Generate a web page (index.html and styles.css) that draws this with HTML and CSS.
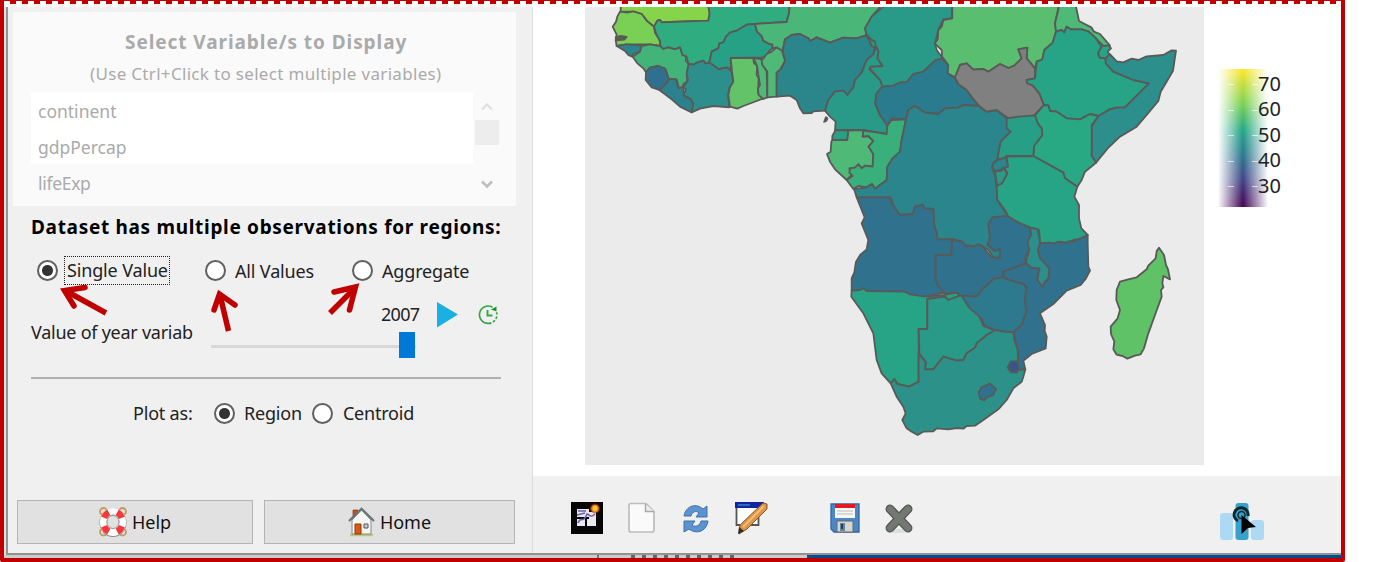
FILE: index.html
```
<!DOCTYPE html>
<html lang="en">
<head>
<meta charset="utf-8">
<title>Map variables</title>
<link rel="stylesheet" href="styles.css">
</head>
<body>
<div class="frame">
  <div class="dashes"></div>
  <main class="window">
    <aside class="side">
      <section class="variables">
        <h2 class="vtitle"><span class="t-title">Select Variable/s to Display</span></h2>
        <p class="hint"><span class="t-hint">(Use Ctrl+Click to select multiple variables)</span></p>
        <div class="listbox">
          <ul class="list"><li>continent</li><li>gdpPercap</li><li class="shade">lifeExp</li></ul>
          <div class="scroll">
            <svg class="chev" width="14" height="12" viewBox="0 0 14 12"><path d="M2 8.500L7 3.500l5 5" fill="none" stroke="#dedede" stroke-width="2"/></svg>
            <div class="thumb"></div>
            <svg class="chev down" width="14" height="12" viewBox="0 0 14 12"><path d="M2 3.500l5 5 5-5" fill="none" stroke="#bebebe" stroke-width="2.600"/></svg>
          </div>
        </div>
      </section>
      <h3 class="dataset"><span class="t-data">Dataset has multiple observations for regions:</span></h3>
      <div class="choices">
        <div class="choice c1"><i class="radio on"></i><span class="focus">Single Value</span></div>
        <div class="choice c2"><i class="radio"></i><span>All Values</span></div>
        <div class="choice c3"><i class="radio"></i><span>Aggregate</span></div>
      </div>
      <div class="year">
        <span class="ylabel">Value of year variab</span>
        <div class="slider">
          <span class="yval">2007</span>
          <div class="track"><div class="handle"></div></div>
        </div>
        <svg class="play" width="21" height="26" viewBox="0 0 21 26"><path d="M0 0L21 12.500 0 25.500z" fill="#1bb0e4"/></svg>
        <svg class="clock" width="22" height="22" viewBox="0 0 22 22" fill="none" stroke="#35a846" stroke-width="1.700"><path d="M15.500 3.200A8.700 8.700 0 1 0 12 19.400"/><path d="M12 19.400A8.700 8.700 0 0 0 19.500 8" stroke-dasharray="2.500 1.800"/><path d="M10.500 6v5.500h5" stroke-width="2"/><path d="M14 5.500l5.500-3v5z" fill="#149c25" stroke="none"/></svg>
      </div>
      <div class="rule"></div>
      <div class="plot"><span class="plabel">Plot as:</span><i class="radio on"></i><span class="region">Region</span><i class="radio"></i><span>Centroid</span></div>
      <div class="buttons">
        <div class="btn help">
          <svg width="28" height="30" viewBox="0 0 28 30"><g fill="none" stroke="#c49b59" stroke-width="1.800"><circle cx="4.500" cy="4.500" r="3.500"/><circle cx="23.500" cy="4.500" r="3.500"/><circle cx="4.500" cy="25" r="3.500"/><circle cx="23.500" cy="25" r="3.500"/></g><ellipse cx="14" cy="15.500" rx="10" ry="11" fill="none" stroke="#8c8c8c" stroke-width="7"/><ellipse cx="14" cy="15" rx="9.800" ry="10.700" fill="none" stroke="#fff" stroke-width="6.500"/><ellipse cx="14" cy="15" rx="9.800" ry="10.700" fill="none" stroke="#f9363a" stroke-width="6.500" pathLength="80" stroke-dasharray="9 11" stroke-dashoffset="-5.500"/><ellipse cx="14" cy="15" rx="6" ry="6.500" fill="#e1e1e1" stroke="#999"/></svg>
          <span>Help</span>
        </div>
        <div class="btn home">
          <svg width="27" height="30" viewBox="0 0 27 30"><path d="M2 28h23" stroke="#bac878" stroke-width="2.500"/><path d="M5 3h5v9H5z" fill="#c64c15" stroke="#873d21" stroke-width=".7"/><path d="M4 13L13.500 3 23 13v14H4z" fill="#f5f5f2" stroke="#888"/><path d="M1 14L13.500 1.800 26 14" fill="none" stroke="#69737a" stroke-width="2.200"/><path d="M7 17h6v10H7z" fill="#d65a13" stroke="#91380e"/><path d="M16 17h4v4h-4z" fill="#ccd" stroke="#555"/></svg>
          <span>Home</span>
        </div>
      </div>
    </aside>
    <section class="main">
      <div class="canvas">
        <svg class="map" width="619" height="458" viewBox="-45 21 1857 1374">
          <g stroke="#595a58" stroke-width="5.500" stroke-linejoin="round">
            <g>
              <path fill="#85d44a" d="M62 0L62 35 100 35 125 42 140 62 162 80 172 62 180 60 185 67 210 66 325 62 329 40 322 0z"/>
              <path fill="#7ad055" d="M60 35L82 38 100 34 125 42 140 62 162 80 165 98 178 118 182 138 150 133 80 133 50 138 47 120 50 104 38 80 48 65 52 50z"/>
              <path fill="#595f4e" d="M47 112L62 108 80 111 73 119 50 121z"/>
              <path fill="#2fad80" d="M322 0L329 40 325 62 210 66 185 67 180 60 172 62 162 80 170 105 180 122 182 143 190 147 205 142 225 148 240 142 247 165 259 170 266 192 280 194 290 188 310 182 316 190 328 188 335 155 355 145 358 130 370 127 378 110 390 98 410 92 440 74 465 72 490 70 560 66 567 40 570 0z"/>
              <path fill="#2a858d" d="M50 138L80 133 125 137 120 155 100 162 96 170 85 165 75 153z"/>
              <path fill="#42b479" d="M125 138L150 133 180 138 190 147 205 142 225 148 240 142 247 165 259 170 257 182 266 192 260 222 262 245 250 252 248 264 236 262 230 238 205 236 198 210 175 198 150 203 138 217 130 205 112 190 98 170 120 155z"/>
              <path fill="#30708e" d="M138 217L150 203 175 198 195 205 206 236 200 250 178 270 155 262 137 240z"/>
              <path fill="#2b818e" d="M178 270L200 250 208 236 228 238 232 255 236 265 250 260 252 288 272 297 280 310 275 337 240 320 215 298z"/>
              <path fill="#2c8f8c" d="M266 192L280 194 290 188 310 182 316 190 328 188 340 195 355 207 380 202 395 214 400 245 388 265 384 285 388 322 340 318 300 326 275 337 280 310 272 297 250 284 258 268 250 262 264 240 260 220z"/>
              <path fill="#27a186" d="M328 188L335 155 355 145 358 130 370 127 378 110 390 98 410 92 440 74 465 72 471 95 485 108 490 122 508 132 517 133 518 145 507 154 502 163 490 172 392 174 393 208 380 202 355 207 340 195z"/>
              <path fill="#62c368" d="M392 174L460 174 462 190 472 197 470 225 476 235 474 280 490 295 470 303 430 318 412 326 390 320 385 285 390 262 400 245 396 214z"/>
              <path fill="#4fb978" d="M460 174L484 177 487 190 500 215 502 292 490 297 476 285 474 265 480 255 475 225 471 197z"/>
              <path fill="#4fb978" d="M485 182L500 162 515 155 530 142 545 150 555 182 540 210 530 218 530 290 502 292 502 215 487 195z"/>
              <path fill="#4ab678" d="M570 0L567 40 560 66 490 70 465 72 471 95 485 108 490 122 508 132 517 133 518 145 530 142 548 153 555 118 575 105 600 102 625 115 631 123 650 112 690 128 730 113 770 115 800 105 795 85 815 50 850 10 850 0z"/>
              <path fill="#2b868c" d="M555 118L575 105 600 102 625 115 631 123 650 112 690 128 730 113 770 115 800 105 810 122 826 140 820 163 800 180 785 218 765 240 760 262 742 285 730 272 705 275 685 300 675 332 640 334 635 339 610 340 600 325 590 300 570 287 530 290 530 218 545 205 556 182 548 153z"/>
              <path fill="#2a9a88" d="M850 0L850 20 815 50 795 85 800 105 820 125 835 155 832 175 847 198 810 200 812 208 840 240 847 260 880 257 920 247 940 225 970 216 1005 182 1028 175 1010 150 1005 130 1015 90 1030 58 1055 55 1057 0z"/>
              <path fill="#2a9a88" d="M829 140L820 163 800 180 785 218 765 240 760 262 742 285 730 272 705 275 685 300 675 332 690 350 707 365 705 390 790 390 860 402 864 375 840 345 825 310 830 280 847 260 840 240 808 207 812 200 847 198 832 175 835 155z"/>
              <path fill="#2a9a88" d="M800 105L812 118 825 125 828 145 815 138z"/>
              <path fill="#27a186" d="M707 390L745 392 742 420 697 420 697 408z"/>
              <path fill="#4fb978" d="M745 392L790 390 788 410 805 408 820 423 806 440 820 462 818 500 795 497 785 505 775 493 765 503 748 505 755 525 740 540 705 508 690 485 681 462 692 455 694 425 697 420 742 420z"/>
              <path fill="#39b07c" d="M790 392L828 397 860 402 862 375 875 360 918 358 905 420 900 455 878 475 862 500 860 540 825 566 816 552 800 562 775 558 760 567 740 540 758 528 748 518 750 505 765 503 775 493 785 505 795 497 818 500 820 462 806 440 820 423 805 408 788 410z"/>
              <path fill="#515755" stroke-width="3" d="M677 350l7 4-4 10-9 3z"/>
            </g>
            <g transform="translate(840 0)">
              <path fill="#2a7b8e" d="M7 260L40 257 60 247 80 246 100 222 130 215 165 182 185 176 205 195 207 222 225 235 235 252 260 270 278 295 298 318 250 315 235 323 195 325 175 342 135 338 105 318 85 330 78 358 35 355 22 378 0 345 -15 310 -10 280z"/>
              <path fill="#2b858d" d="M78 358L85 330 105 318 135 338 175 342 195 325 235 323 250 315 298 318 320 335 350 330 380 355 383 380 392 395 362 425 355 475 340 490 337 505 345 525 350 560 352 600 375 635 385 650 338 652 325 672 330 710 323 735 345 753 360 747 360 774 340 772 325 750 310 740 295 732 290 740 255 735 245 725 220 718 172 718 170 697 163 680 160 627 133 625 128 614 106 620 98 642 60 645 40 617 32 592 -70 592 -78 567 -40 562 -24 552 -15 566 20 540 22 500 38 475 60 455 65 420z"/>
              <path fill="#59be70" d="M217 0L217 55 190 60 185 80 175 90 173 118 164 130 185 150 186 170 205 195 203 220 225 232 240 195 260 190 280 209 310 207 325 215 360 192 385 204 403 197 425 175 415 148 442 143 440 175 465 205 470 185 487 178 493 150 518 128 528 95 525 70 536 20 536 0z"/>
              <path fill="#4fb978" d="M536 0L536 25 525 70 528 95 545 90 553 97 560 80 572 88 605 88 625 94 645 112 672 140 690 137 660 102 642 95 635 83 597 63 588 20 588 0z"/>
              <path fill="#808080" d="M225 232L240 195 260 190 280 209 310 207 325 215 360 192 385 204 403 197 425 175 415 148 442 143 440 175 465 205 465 235 440 240 441 249 459 257 478 280 492 315 462 346 450 352 385 355 350 330 320 335 298 318 278 295 260 270 235 252z"/>
              <path fill="#26a485" d="M528 95L545 90 553 97 560 80 572 88 605 88 625 94 645 112 664 140 655 165 660 173 677 175 677 186 700 215 760 240 807 250 735 322 710 323 690 328 655 348 630 342 600 358 560 355 530 335 510 333 505 316 492 315 478 280 459 257 441 249 440 240 465 235 470 185 487 178 493 150 518 128z"/>
              <path fill="#26a485" d="M666 138L686 136 693 145 683 155 689 164 677 175 660 173 654 158z"/>
              <path fill="#2c8f8c" d="M677 175L689 162 710 184 730 187 755 176 775 180 800 169 850 165 875 151 888 152 879 212 858 248 842 275 835 303 800 345 770 380 720 410 683 445 648 488 635 468 635 380 655 348 690 328 710 323 735 322 807 250 760 240 700 215 677 190z"/>
              <path fill="#28a984" d="M465 346L492 315 505 316 510 333 530 335 560 355 600 358 630 342 655 348 635 375 635 468 648 488 615 515 605 540 592 560 555 535 550 518 460 468 462 438 487 405 485 385 473 370z"/>
              <path fill="#279f87" d="M380 355L415 350 465 346 473 370 485 385 487 405 462 438 460 468 380 468 370 478 352 477 362 425 392 395 380 385z"/>
              <path fill="#26a485" d="M380 470L460 468 550 518 555 535 592 560 583 590 597 615 597 655 604 685 623 705 600 717 580 720 570 730 540 725 530 732 508 728 480 730 477 690 450 683 420 670 385 650 375 630 352 600 350 555 365 550 382 520 373 505 383 498z"/>
              <path fill="#2b858d" d="M352 480L378 472 384 500 366 507 345 514 336 502 340 490z"/>
              <path fill="#2a9a88" d="M345 515L365 512 369 503 382 520 366 550 352 557 348 535z"/>
            </g>
            <g transform="translate(720 600)">
              <path fill="#30718d" d="M50 -8L150 -8 158 15 180 45 218 42 225 20 248 14 253 25 280 27 283 80 290 97 292 118 338 118 333 165 287 165 287 240 295 258 315 278 255 290 210 283 195 275 80 273 70 265 60 270 35 272 35 235 43 217 48 185 62 163 80 148 85 120 65 70 74 52 60 17z"/>
              <path fill="#26a485" d="M35 272L60 270 70 265 80 273 195 275 210 283 255 290 310 285 350 278 362 285 325 300 315 290 262 297 262 387 236 387 236 545 208 560 172 552 163 537 152 550 125 520 110 480 100 400 70 340 34 290z"/>
              <path fill="#2a9a88" d="M262 297L315 290 325 300 365 285 385 320 415 343 430 378 465 392 440 405 410 430 405 443 380 460 370 480 350 482 310 470 280 508 255 508 257 487 238 460 236 387 262 387z"/>
              <path fill="#30728e" d="M338 118L365 125 376 137 400 140 415 133 430 142 455 172 480 174 480 147 464 153 443 135 450 110 445 72 458 52 500 47 535 68 570 83 573 105 567 125 567 150 555 175 557 190 490 215 492 232 462 236 425 270 410 290 362 287 350 278 315 280 295 258 287 240 287 165 333 165z"/>
              <path fill="#2d798e" d="M365 287L410 290 425 270 462 236 492 232 515 242 550 252 560 262 555 300 560 335 545 375 520 397 490 395 465 390 432 375 425 355 390 325z"/>
              <path fill="#30718d" d="M600 130L630 128 640 132 655 125 670 130 690 123 700 125 743 105 743 130 745 200 750 212 738 235 722 255 680 272 640 312 600 340 615 375 614 393 620 410 617 445 575 462 550 482 556 508 535 510 533 450 520 397 545 375 560 335 555 300 560 262 550 252 515 242 492 232 490 215 557 190 575 203 597 205 592 240 608 260 625 235 628 205 600 175 593 150z"/>
              <path fill="#2c8f8c" d="M570 83L592 87 598 110 600 130 593 150 600 175 628 205 625 235 615 245 608 260 592 240 598 205 575 203 557 188 568 150 563 125 574 105z"/>
              <path fill="#2c9289" d="M152 550L163 537 172 552 208 560 236 545 236 460 257 487 255 508 280 508 310 470 350 482 370 480 380 460 405 443 410 430 440 405 465 390 490 395 520 397 523 420 533 450 535 510 556 508 550 530 545 545 520 565 500 600 475 628 430 660 405 677 380 678 370 686 350 684 325 688 290 685 280 694 250 695 233 705 215 695 200 685 187 660 197 640 190 620 170 590z"/>
              <path fill="#30718d" d="M416 577L424 562 450 551 468 567 460 585 440 592 432 601 420 595z"/>
              <path fill="#39568c" d="M512 484L532 484 537 508 530 518 512 516 503 502z"/>
              <path fill="#5fc267" d="M957 143L972 165 978 195 984 208 990 238 970 228 967 250 970 262 963 270 965 290 945 345 925 400 912 445 902 463 885 467 862 476 848 468 830 464 820 448 823 425 813 402 812 380 833 355 840 330 829 300 830 270 840 245 865 238 890 232 920 208 925 197 947 175 950 153z"/>
            </g>
          </g>
        </svg>
        <div class="legend">
          <div class="ramp"><div class="ticks"><i></i><i></i><i></i><i></i><i></i></div></div>
          <div class="nums"><span>70</span><span>60</span><span>50</span><span>40</span><span>30</span></div>
        </div>
      </div>
      <div class="toolbar">
        <svg width="32" height="32" viewBox="0 0 32 32"><path fill="#050505" d="M0 0h32v32H0z"/><path d="M6 7h12v8H6zM18 10h7v8h-7zM6 17h8v7H6zM16 17h9v7h-9z" fill="#e9e7ef"/><path d="M7 9h8M7 21c3-8 5 2 9-9 2 0 3 5 8 0M6 13l8-2" stroke="#6c62a8" stroke-width="1.600" fill="none"/><circle cx="24" cy="6.500" r="5" fill="#c42c0b" opacity=".6"/><circle cx="24" cy="6.500" r="3" fill="#f6d342" stroke="#ee891b" stroke-width="1.500"/></svg>
        <svg class="t2" width="30" height="32" viewBox="0 0 30 32"><path d="M4 1.500h15l8 8V28q0 2-2 2H4q-2 0-2-2V3.500q0-2 2-2z" fill="#fafafa" stroke="#bdbdbd" stroke-width="1.700"/><path d="M18.500 2v7.500H27" fill="#eee" stroke="#aaa" stroke-width="1.500"/></svg>
        <svg class="t3" width="28" height="30" viewBox="0 0 28 30"><g fill="#5b94cf" stroke="#3d71aa" stroke-width="1" stroke-linejoin="round"><path d="M2 12C4 1 15-1 21 5l4-3v11H14l3-4c-3-3-7-1-8 3z"/><path d="M26 17C24 29 13 30 7 25l-5 3V17h11l-3 4c4 3 8 0 9-4z"/></g></svg>
        <svg class="t4" width="33" height="33" viewBox="0 0 33 33"><path d="M1.500 1h22v22h-22z" fill="#fff" stroke="#555" stroke-width="1.800"/><path d="M0 0h29v6H0z" fill="#1026a0"/><path d="M3 3h12" stroke="#3384c7" stroke-width="1.500"/><path d="M28 1l4 1v5L12 27l-8 5 1-9z" fill="#dc9448" stroke="#8a5529"/><path d="M29 4L8 25" stroke="#f5bd78" stroke-width="2"/><path d="M3 32l1-7 5 4z" fill="#332b2a"/></svg>
        <svg class="t5" width="30" height="30" viewBox="0 0 30 30"><path d="M1 1h28v28H4l-3-3z" fill="#4b86c7" stroke="#3166a2" stroke-width="1.300"/><path d="M5 1h20v14H5z" fill="#f6f6f5"/><path d="M5 1h20v4H5z" fill="#e71920"/><path d="M7 8h16M7 11h16" stroke="#bbb"/><path d="M7 18h16v11H7z" fill="#d6d6d3" stroke="#666"/><path d="M10 20h5v8h-5z" fill="#6485a3"/><path d="M12 21v5" stroke="#233e57" stroke-width="2"/></svg>
        <svg class="t6" width="30" height="31" viewBox="0 0 30 31"><ellipse cx="15" cy="28" rx="12" ry="2" fill="#ddd"/><path d="M6 6l18 19M24 6L6 25" stroke="#4f534f" stroke-width="9" stroke-linecap="round"/><path d="M6 6l18 19M24 6L6 25" stroke="#747873" stroke-width="6.500" stroke-linecap="round"/></svg>
        <svg class="t7" width="44" height="38" viewBox="0 0 44 38"><rect x="0" y="10" width="13" height="27" rx="3" fill="#addaf2"/><rect x="31" y="17" width="13" height="20" rx="3" fill="#addaf2"/><rect x="15.500" width="13" height="37" rx="3" fill="#36a1cd"/><path d="M18 18a7 7 0 1 1 10-5" fill="none" stroke="#10272e" stroke-width="3"/><circle cx="21.500" cy="12" r="3.500" fill="none" stroke="#10272e" stroke-width="1.500"/><path d="M21.500 12L36 24l-8 1-6.500 6z" fill="#050505"/></svg>
      </div>
    </section>
  </main>
  <div class="behind"><span class="tab"></span><span class="marks"></span><span class="blue"></span></div>
  <svg class="arrows" width="400" height="70" viewBox="0 0 400 70" fill="none" stroke="#c00000" stroke-width="5.500" stroke-linecap="round" stroke-miterlimit="8"><path d="M28 16.500L7.500 19.500 17 35"/><path d="M49 42L9 20" stroke-linecap="butt"/><path d="M157 39l5.500-16L178 34"/><path d="M171.500 60L163 24" stroke-linecap="butt"/><path d="M277 21l21.500-5-6 23"/><path d="M273 42l24-24" stroke-linecap="butt"/></svg>
</div>
</body>
</html>
```

FILE: styles.css
```
* { box-sizing: border-box; }
body { margin: 0; background: #fff; font-family: "Noto Sans", "Open Sans", sans-serif; font-size: 18px; line-height: 24px; color: #222; overflow: hidden; }
h2, h3, p, ul { margin: 0; padding: 0; font-weight: inherit; }
svg { display: block; flex: none; }
span { white-space: nowrap; }
.frame { position: relative; width: 1345px; height: 562px; border: 4px solid #c00000; border-radius: 0 0 2px 2px; background: #e2e2e2; }
.dashes { position: absolute; left: 0; right: 0; top: -3px; height: 6px; background: repeating-linear-gradient(90deg, #fff 0 6px, transparent 6px 12px); z-index: 2; }
.window { display: flex; height: 551px; margin-left: 2px; border-left: 2px solid #929292; border-bottom: 2px solid #929292; background: #f0f0f0; }
.side { width: 525px; height: 549px; padding: 8px 17px 0 5px; flex: none; display: flex; flex-direction: column; border-right: 1px solid #dcdcdc; }
.variables { height: 194px; width: 503px; background: #fafafa; color: #aaa; padding: 18px 0 0 18px; }
.vtitle { height: 32px; padding-left: 94px; font-weight: 700; font-size: 19px; letter-spacing: .93px; }
.hint { height: 30px; padding-left: 59px; font-size: 17px; letter-spacing: .32px; }
.listbox { display: flex; height: 106px; }
.list { list-style: none; width: 442px; background: #fff; }
.list li { height: 36px; padding: 7px 0 0 7px; font-size: 17.500px; }
.list .shade { background: #fafafa; height: 34px; letter-spacing: -.3px; }
.scroll { width: 28px; display: flex; flex-direction: column; align-items: center; padding-top: 9px; }
.thumb { width: 24px; height: 25px; background: #ededed; margin-top: 7px; }
.down { margin-top: 33px; }
.dataset { height: 42px; padding: 9px 0 0 18px; color: #000; font-weight: 700; font-size: 19px; letter-spacing: .69px; }
.choices { display: grid; grid-template-columns: 168px 147px 1fr; padding-left: 24px; height: 45px; align-items: center; letter-spacing: -.15px; }
.choice { display: flex; align-items: center; gap: 9px; }
.radio { flex: none; width: 21px; height: 21px; border: 2px solid #606060; border-radius: 50%; background: #fff; }
.radio.on { background: radial-gradient(circle, #333 0 5px, #fff 6px); }
.focus { height: 29px; line-height: 26px; border: 1px dotted #222; padding: 0 2px; margin-left: -3px; width: 106px; }
.year { height: 84px; display: flex; align-items: flex-start; padding: 9px 0 0 18px; }
.ylabel { width: 180px; padding-top: 18px; letter-spacing: -.25px; }
.slider { width: 205px; }
.yval { display: block; padding-left: 170px; height: 43px; letter-spacing: -.7px; }
.track { height: 3px; background: #d8d8d8; }
.handle { width: 16px; height: 26px; background: #0078d7; position: relative; left: 188px; top: -13px; }
.play { margin-left: 21px; }
.clock { margin: 2px 0 0 19px; }
.rule { width: 470px; margin-left: 18px; border-top: 2px solid #b0b0b0; }
.plot { height: 68px; display: flex; align-items: center; padding-left: 120px; letter-spacing: -.2px; }
.plabel { width: 81px; }
.region { margin: 0 10px 0 9px; }
.plot > span:last-child { margin-left: 10px; }
.buttons { display: grid; grid-template-columns: 236px 251px; gap: 11px; margin: 53px 0 0 4px; height: 44px; }
.btn { background: #e1e1e1; border: 1.500px solid #b4b4b4; display: flex; align-items: center; justify-content: center; gap: 5px; color: #111; }
.main { flex: 1; min-width: 0; display: flex; flex-direction: column; }
.canvas { height: 472px; background: #fff; display: flex; padding: 3px 0 0 52px; }
.map { background: #ebebeb; }
.legend { display: flex; margin: 62px 0 0 14px; height: 138px; }
.ramp { width: 50px; height: 138px; background: linear-gradient(90deg, #fff 0, transparent 50%, #fff 100%), linear-gradient(#fde725, #7ad151 25%, #22a884 44%, #2a788e 62%, #414487 80%, #440154); padding: 15px 10px; }
.ticks { height: 103px; display: flex; flex-direction: column; justify-content: space-between; }
.ticks i { height: 1px; display: flex; justify-content: space-between; }
.ticks i::before, .ticks i::after { content: ""; width: 6px; height: 1px; background: rgba(255,255,255,.65); }
.nums { display: flex; flex-direction: column; margin: 3px 0 0 -10px; z-index: 1; font-size: 20px; }
.nums span { height: 25.400px; }
.toolbar { flex: 1; display: flex; padding: 26px 0 0 38px; }
.t2 { margin-left: 24px; }
.t3 { margin: 2px 0 0 25px; }
.t4 { margin-left: 25px; }
.t5 { margin: 1px 0 0 62px; }
.t6 { margin: 1px 0 0 24px; }
.t7 { margin: 1px 0 0 306px; }
.behind { height: 3px; display: flex; background: #ccc; }
.tab { width: 595px; border-right: 2px solid #777; margin-right: 32px; }
.marks { width: 110px; background: repeating-linear-gradient(90deg, #666 0 4px, #ccc 4px 11px); }
.blue { flex: 1; margin-left: 66px; background: #004e91; border-left: 6px solid #174d7c; }
.arrows { position: absolute; left: 53px; top: 267px; }
```
